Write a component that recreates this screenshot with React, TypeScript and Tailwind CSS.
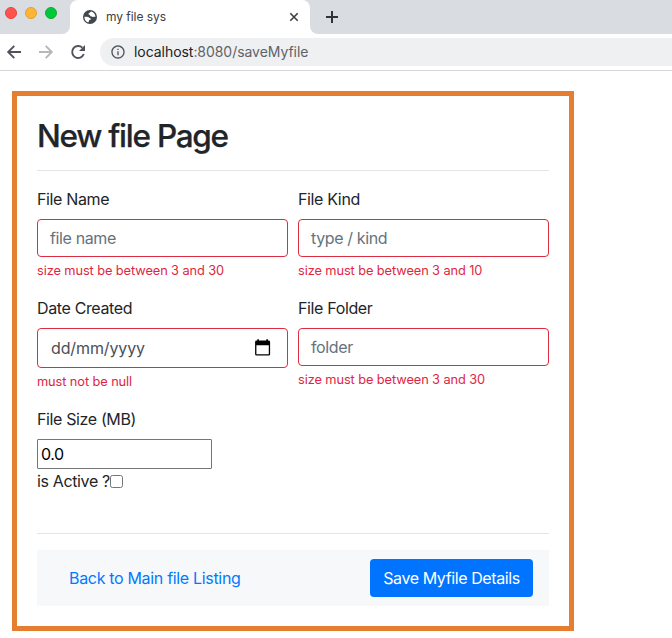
import React from "react";
import { MdInfoOutline } from "react-icons/md";

function Globe() {
  return (
    <svg width="14" height="14" viewBox="0 0 14 14" className="shrink-0">
      <circle cx="7" cy="7" r="7" fill="#42474d" />
      <path
        d="M8.4 1.6 C7.2 1.9 7.2 2.6 6.3 3 C5.2 3.4 5.1 4.3 5.9 4.6 C6.7 4.8 6.9 5.2 7.2 5.9 C7.5 6.6 8.6 6.2 9.3 6.7 C10.1 7.3 10.9 6.6 12.5 6.9 C12.4 4.4 10.7 2.3 8.4 1.6 Z M1.4 6.9 C3 6.6 5 6.6 5.8 7.4 C6.5 8.1 8 7.9 7.9 9 C7.8 9.9 6.3 9.7 6.1 10.6 C6 11.5 5.7 11.8 5.2 12.4 C2.9 11.6 1.3 9.5 1.4 6.9 Z"
        fill="#fff"
      />
    </svg>
  );
}

function Calendar() {
  return (
    <svg width="16" height="18" viewBox="0 0 16 18" className="shrink-0">
      <path
        fillRule="evenodd"
        d="M2.3 0.2 H3.9 V1.6 H11.3 V0.2 H12.9 V1.6 H13.6 Q15.1 1.6 15.1 3 V15.2 Q15.1 16.6 13.6 16.6 H1.6 Q0.1 16.6 0.1 15.2 V3 Q0.1 1.6 1.6 1.6 H2.3 Z M1.4 6.2 V15.3 H13.8 V6.2 Z"
        fill="#000"
      />
    </svg>
  );
}

function NavIcon({ d, color }: { d: string; color: string }) {
  return (
    <svg width="20" height="20" viewBox="0 0 20 20" fill="none" stroke={color} strokeWidth="1.9" className="shrink-0">
      <path d={d} />
    </svg>
  );
}

function Reload() {
  return (
    <svg width="20" height="20" viewBox="0 0 20 20" className="shrink-0">
      <path d="M14.4 5.7 A6 6 0 1 0 15.8 12" fill="none" stroke="#50545a" strokeWidth="1.9" />
      <path d="M17 3 V9 H11 Z" fill="#50545a" />
    </svg>
  );
}

type FieldProps = {
  label: string;
  value: string;
  error: string;
  date?: boolean;
};

function Field({ label, value, error, date }: FieldProps) {
  return (
    <div className="w-[251px]">
      <div className="h-6 text-base leading-6 tracking-[-0.36px] whitespace-nowrap">{label}</div>
      <div
        className={`mt-2 flex items-center justify-between rounded border border-[#dc2d43] ${
          date
            ? "h-10 pl-[13px] pr-4 tracking-[-0.12px] text-[#495057]"
            : "h-[38px] px-3 tracking-[-0.37px] text-[#66727c]"
        }`}
      >
        <span className="text-base leading-6 whitespace-nowrap">{value}</span>
        {date && <Calendar />}
      </div>
      <div className="mt-1 h-5 text-[12.8px] leading-[19px] tracking-[-0.09px] whitespace-nowrap text-[#e0263f]">{error}</div>
    </div>
  );
}

export default function App() {
  return (
    <div className="h-[638px] w-[672px] overflow-hidden bg-white font-['Inter',sans-serif] text-[#212529]">
      <header>
        <div className="flex h-[34px] bg-white">
          <div className="flex w-[70px] gap-2 rounded-br-lg bg-[#d9dce1] pl-[5px] pt-[7px]">
            <span className="size-3 rounded-full border border-[#e2463f] bg-[#ff544d]" />
            <span className="size-3 rounded-full border border-[#e1a032] bg-[#ffb434]" />
            <span className="size-3 rounded-full border border-[#12ac28] bg-[#00c83c]" />
          </div>
          <div className="w-[240px] bg-[#d9dce1]">
            <div className="flex h-[34px] items-center rounded-t-lg bg-white pl-[13px] pr-[11px]">
              <Globe />
              <span className="ml-[9px] text-xs leading-4 tracking-[-0.04px] text-[#3c4043]">my file sys</span>
              <svg width="10" height="10" viewBox="0 0 10 10" className="ml-auto">
                <path d="M1.3 1.3 L8.7 8.7 M8.7 1.3 L1.3 8.7" stroke="#3c4043" strokeWidth="1.6" />
              </svg>
            </div>
          </div>
          <div className="flex flex-1 items-center rounded-bl-lg bg-[#d9dce1] pl-4">
            <svg width="12" height="12" viewBox="0 0 12 12">
              <path d="M6 0 V12 M0 6 H12" stroke="#303438" strokeWidth="2" />
            </svg>
          </div>
        </div>
        <div className="flex h-[37px] items-center border-b border-[#d5d6da] pl-1">
          <NavIcon d="M17 10 H4.5 M10.3 3.9 L4.2 10 L10.3 16.1" color="#50545a" />
          <span className="ml-3">
            <NavIcon d="M3 10 H15.5 M9.7 3.9 L15.8 10 L9.7 16.1" color="#b5b7ba" />
          </span>
          <span className="ml-3">
            <Reload />
          </span>
          <div className="ml-3 flex h-7 flex-1 items-center rounded-l-full bg-[#eff0f2] pl-2.5">
            <MdInfoOutline size={16} color="#50545a" />
            <span className="ml-2 text-sm leading-5 tracking-[-0.05px] whitespace-nowrap text-[#5f6368]">
              <span className="text-[#202124]">localhost</span>:8080/saveMyfile
            </span>
          </div>
        </div>
      </header>

      <main className="ml-3 mt-5 h-[540px] w-[562px] border-[5px] border-[#e67e31] px-5 pt-[21px]">
        <h1 className="h-[38px] text-[31.5px] font-medium leading-[38px] tracking-[-1.25px] whitespace-nowrap [-webkit-text-stroke:0.25px_#212529]">
          New file Page
        </h1>
        <hr className="mt-[15px] border-[#e5e5e5]" />
        <form className="mt-4">
          <div className="flex h-[109px] gap-2.5">
            <Field label="File Name" value="file name" error="size must be between 3 and 30" />
            <Field label="File Kind" value="type / kind" error="size must be between 3 and 10" />
          </div>
          <div className="flex h-[111px] gap-2.5">
            <Field label="Date Created" value="dd/mm/yyyy" error="must not be null" date />
            <Field label="File Folder" value="folder" error="size must be between 3 and 30" />
          </div>
          <div className="h-6 text-base leading-6 tracking-[-0.37px]">File Size (MB)</div>
          <div className="mt-2 flex h-[30px] w-[175px] items-center rounded-[1px] border border-[#767676] pl-[3px] text-base tracking-[-0.5px] text-black">0.0</div>
          <div className="flex h-6 items-center text-base tracking-[-0.36px]">
            <span>is Active ?</span>
            <span className="size-[13px] rounded-[2.5px] border border-[#767676]" />
          </div>
          <hr className="mt-10 border-[#e5e5e5]" />
          <div className="mt-4 flex h-14 items-center justify-between bg-[#f7f8fa] pl-8 pr-4">
            <span className="text-base tracking-[-0.32px] text-[#007bff]">Back to Main file Listing</span>
            <span className="flex h-[38px] w-[163px] items-center justify-center rounded bg-[#0073ff] text-base tracking-[-0.4px] whitespace-nowrap text-white">
              Save Myfile Details
            </span>
          </div>
        </form>
      </main>
    </div>
  );
}
